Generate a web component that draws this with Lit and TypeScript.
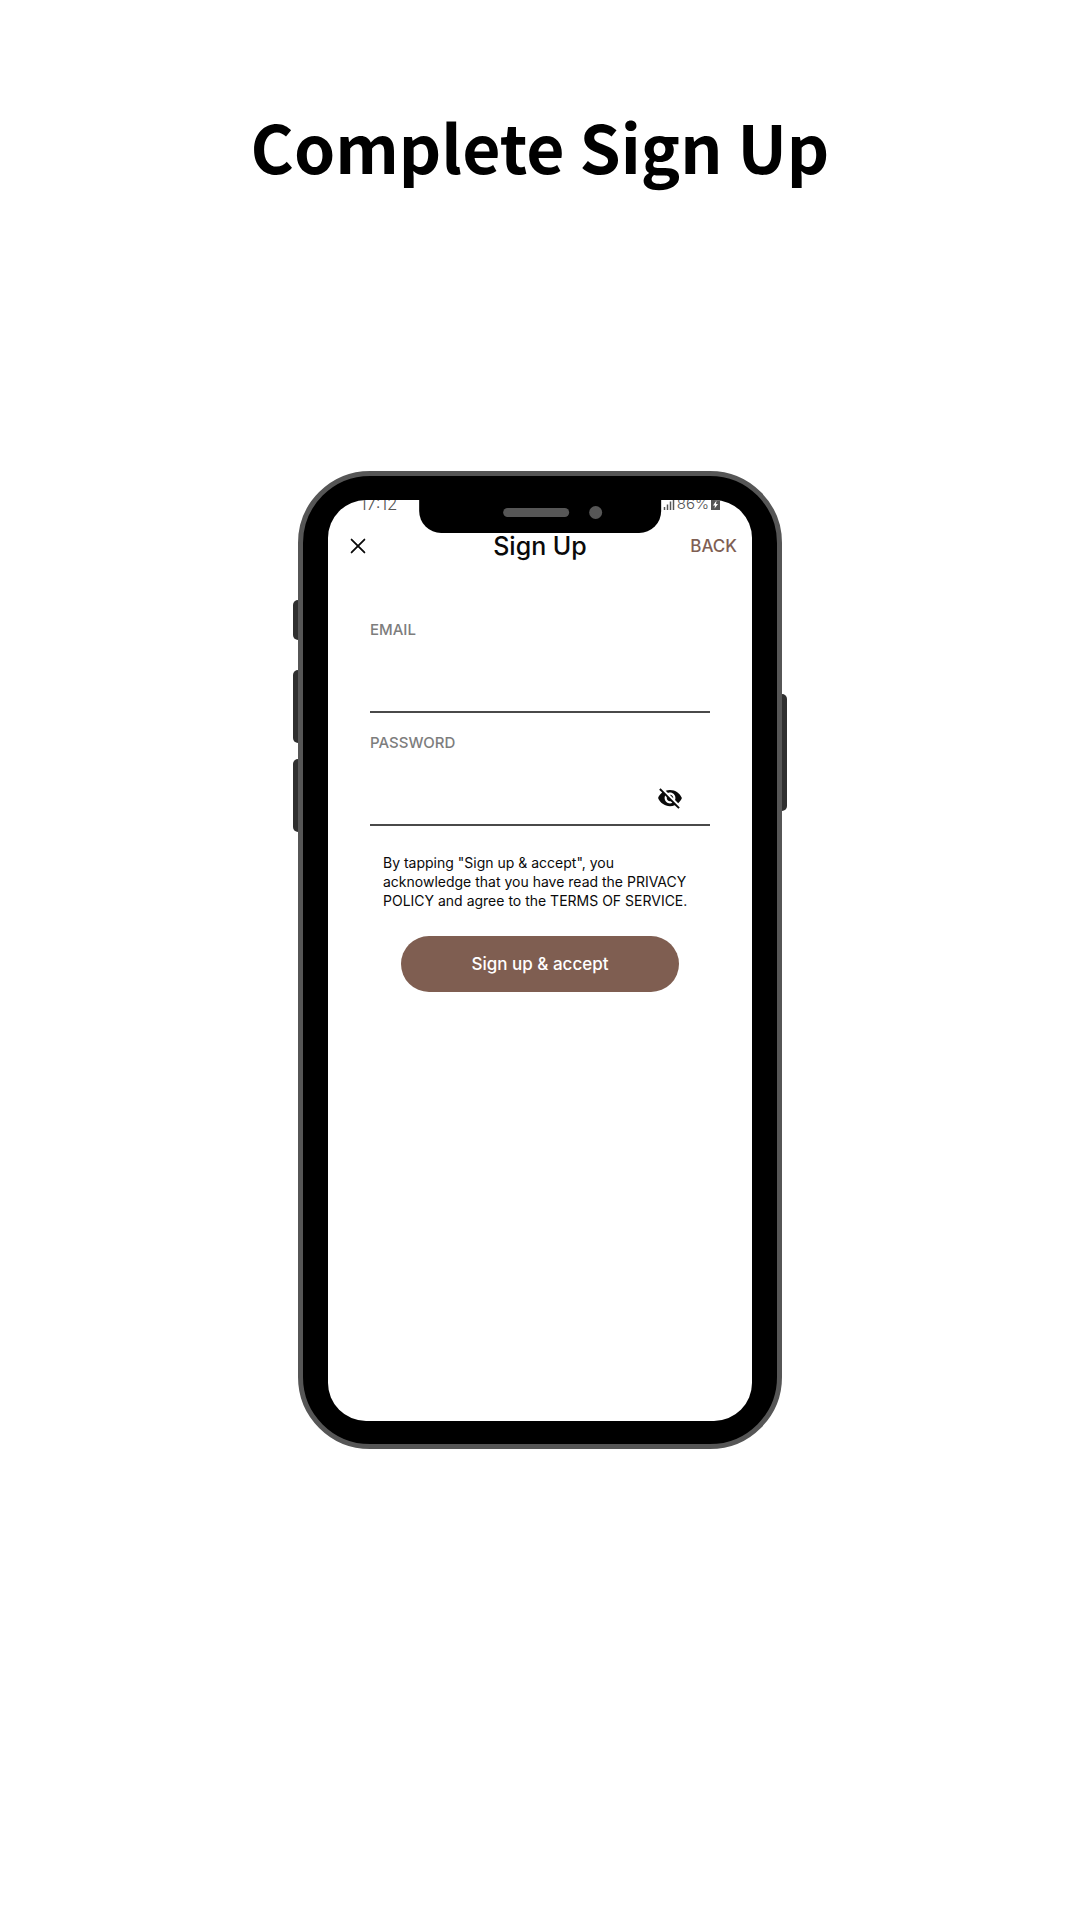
import { LitElement, html, css, svg } from "lit";
import { customElement, state } from "lit/decorators.js";

const closeIcon = svg`<path d="M5 5 19 19M19 5 5 19" fill="none" stroke="currentColor" stroke-width="2" stroke-linecap="round" />`;

const eyeOffIcon = svg`<path fill="currentColor" d="M12 7c2.76 0 5 2.24 5 5 0 .65-.13 1.26-.36 1.83l2.92 2.92c1.51-1.26 2.7-2.89 3.43-4.75-1.73-4.39-6-7.5-11-7.5-1.4 0-2.74.25-3.98.7l2.16 2.16C10.74 7.13 11.35 7 12 7zM2 4.27l2.28 2.28.46.46C3.08 8.3 1.78 10.02 1 12c1.73 4.39 6 7.5 11 7.5 1.55 0 3.03-.3 4.38-.84l.42.42L19.73 22 21 20.73 3.27 3 2 4.27zM7.53 9.8l1.55 1.55c-.05.21-.08.43-.08.65 0 1.66 1.34 3 3 3 .22 0 .44-.03.65-.08l1.55 1.55c-.67.33-1.41.53-2.2.53-2.76 0-5-2.24-5-5 0-.79.2-1.53.53-2.2zm4.31-.78l3.15 3.15.02-.16c0-1.66-1.34-3-3-3l-.17.01z" />`;

const eyeIcon = svg`<path fill="currentColor" d="M12 4.5C7 4.5 2.73 7.61 1 12c1.73 4.39 6 7.5 11 7.5s9.27-3.11 11-7.5c-1.73-4.39-6-7.5-11-7.5zM12 17c-2.76 0-5-2.24-5-5s2.24-5 5-5 5 2.24 5 5-2.24 5-5 5zm0-8c-1.66 0-3 1.34-3 3s1.34 3 3 3 3-1.34 3-3-1.34-3-3-3z" />`;

@customElement("sign-up-form")
export class SignUpForm extends LitElement {
  static styles = css`
    :host {
      display: block;
      color: #0a0a0a;
      font-family: Inter, "Liberation Sans", sans-serif;
    }
    button,
    input {
      margin: 0;
      padding: 0;
      border: 0;
      background: none;
      color: inherit;
      font: inherit;
    }
    button {
      cursor: pointer;
    }
    .nav {
      display: grid;
      grid-template-columns: 1fr auto 1fr;
      align-items: center;
      padding: 16px 15px 0;
      line-height: 32px;
    }
    .close {
      display: flex;
      justify-self: start;
      padding: 0 4px;
    }
    .close svg {
      width: 22px;
      height: 22px;
    }
    .title {
      margin: 0;
      font-size: 25px;
      font-weight: 500;
    }
    .back {
      justify-self: end;
      color: #7f5f53;
      font-size: 17px;
      font-weight: 500;
      text-decoration: none;
    }
    .form {
      display: flex;
      flex-direction: column;
      padding: 58px 42px 0;
    }
    .field {
      display: flex;
      flex-direction: column;
      margin-bottom: 20px;
      border-bottom: 2px solid #4a4a4a;
    }
    .label {
      color: #7d7d7d;
      font-size: 15px;
      font-weight: 500;
      line-height: 20px;
    }
    .control {
      display: flex;
      align-items: flex-end;
      box-sizing: border-box;
      height: 71px;
      padding: 0 27px 13px 0;
    }
    .input {
      flex: 1;
      min-width: 0;
      height: 32px;
      font-size: 17px;
      outline: none;
    }
    .toggle {
      display: flex;
    }
    .toggle svg {
      width: 26px;
      height: 26px;
    }
    .legal {
      margin: 7px 0 26px;
      padding: 0 8px 0 13px;
      font-size: 14px;
      line-height: 19px;
    }
    .submit {
      margin: 0 31px;
      height: 56px;
      border-radius: 28px;
      background: #7f5e51;
      color: #fff;
      font-size: 17px;
      font-weight: 500;
    }
  `;

  @state() private shown = false;

  render() {
    return html`
      <header class="nav">
        <button class="close" type="button" aria-label="Close">
          <svg viewBox="0 0 24 24">${closeIcon}</svg>
        </button>
        <h2 class="title">Sign Up</h2>
        <a class="back" href="#">BACK</a>
      </header>
      <form class="form" @submit=${(e: Event) => e.preventDefault()}>
        <div class="field">
          <label class="label" for="email">EMAIL</label>
          <div class="control">
            <input class="input" id="email" type="email" autocomplete="email" />
          </div>
        </div>
        <div class="field">
          <label class="label" for="password">PASSWORD</label>
          <div class="control">
            <input class="input" id="password" type=${this.shown ? "text" : "password"} />
            <button
              class="toggle"
              type="button"
              aria-label="Toggle password visibility"
              @click=${() => (this.shown = !this.shown)}
            >
              <svg viewBox="0 0 24 24">${this.shown ? eyeIcon : eyeOffIcon}</svg>
            </button>
          </div>
        </div>
        <p class="legal">
          By tapping "Sign up &amp; accept", you<br />acknowledge that you have read the PRIVACY
          POLICY and agree to the TERMS OF SERVICE.
        </p>
        <button class="submit" type="submit">Sign up &amp; accept</button>
      </form>
    `;
  }
}

@customElement("phone-frame")
export class PhoneFrame extends LitElement {
  static styles = css`
    :host {
      display: block;
      position: relative;
      box-sizing: border-box;
      width: 100%;
      max-width: 484px;
      aspect-ratio: 484 / 978;
    }
    .body {
      position: relative;
      box-sizing: border-box;
      display: flex;
      height: 100%;
      padding: 24px 25px 23px;
      border: 5px solid #565656;
      border-radius: 72px;
      background: #000;
    }
    .screen {
      position: relative;
      flex: 1;
      min-width: 0;
      overflow: hidden;
      border-radius: 38px;
      background: #fff;
    }
    .notch {
      position: absolute;
      top: 0;
      left: 50%;
      transform: translateX(-50%);
      display: flex;
      align-items: center;
      justify-content: center;
      gap: 20px;
      box-sizing: border-box;
      width: 57%;
      height: 33px;
      padding: 0 0 9px 26px;
      border-radius: 0 0 22px 22px;
      background: #000;
    }
    .speaker {
      width: 66px;
      height: 9px;
      border-radius: 5px;
      background: #565656;
    }
    .camera {
      width: 13px;
      height: 13px;
      border-radius: 50%;
      background: #565656;
    }
    .status {
      display: flex;
      justify-content: space-between;
      margin-top: -6px;
      padding: 0 32px;
      color: #555;
      font: 300 17px/20px Inter, "Liberation Sans", sans-serif;
    }
    .right {
      display: flex;
      align-items: center;
      gap: 2px;
      font-size: 15px;
    }
    .signal {
      width: 12px;
      height: 12px;
    }
    .battery {
      width: 9px;
      height: 12px;
    }
    .key {
      position: absolute;
      left: -5px;
      width: 6px;
      border-radius: 5px 0 0 5px;
      background: #2f2f2f;
    }
    .mute {
      top: 13.2%;
      height: 4.1%;
    }
    .up {
      top: 20.3%;
      height: 7.5%;
    }
    .down {
      top: 29.4%;
      height: 7.5%;
    }
    .power {
      left: auto;
      right: -5px;
      top: 22.8%;
      height: 12%;
      border-radius: 0 5px 5px 0;
    }
  `;

  render() {
    return html`
      <span class="key mute"></span>
      <span class="key up"></span>
      <span class="key down"></span>
      <span class="key power"></span>
      <div class="body">
        <div class="screen">
          <div class="status">
            <span>17:12</span>
            <span class="right">
              <svg class="signal" viewBox="0 0 12 12">
                <path d="M1.5 9v3M4.5 6.5v5.5M7.5 3.5v8.5M10.5 0v12" stroke="currentColor" stroke-width="1.5" />
              </svg>
              <span>86%</span>
              <svg class="battery" viewBox="0 0 9 12">
                <path fill="currentColor" d="M3 0h3v1.5h3V12H0V1.5h3z" />
                <path fill="#fff" d="M5.5 2.5 2 7.5h2L3.5 10.5 7 6H5z" />
              </svg>
            </span>
          </div>
          <slot></slot>
          <div class="notch">
            <span class="speaker"></span>
            <span class="camera"></span>
          </div>
        </div>
      </div>
    `;
  }
}

@customElement("app-root")
export class AppRoot extends LitElement {
  static styles = css`
    :host {
      display: block;
    }
    .page {
      display: flex;
      flex-direction: column;
      align-items: center;
      box-sizing: border-box;
      min-height: 100vh;
      padding: 95px 24px;
      background: #fff;
    }
    .heading {
      margin: 0 0 276px;
      color: #000;
      font: 700 66px/100px "Noto Sans CJK JP", "Open Sans", sans-serif;
      text-align: center;
    }
  `;

  render() {
    return html`
      <main class="page">
        <h1 class="heading">Complete Sign Up</h1>
        <phone-frame>
          <sign-up-form></sign-up-form>
        </phone-frame>
      </main>
    `;
  }
}
